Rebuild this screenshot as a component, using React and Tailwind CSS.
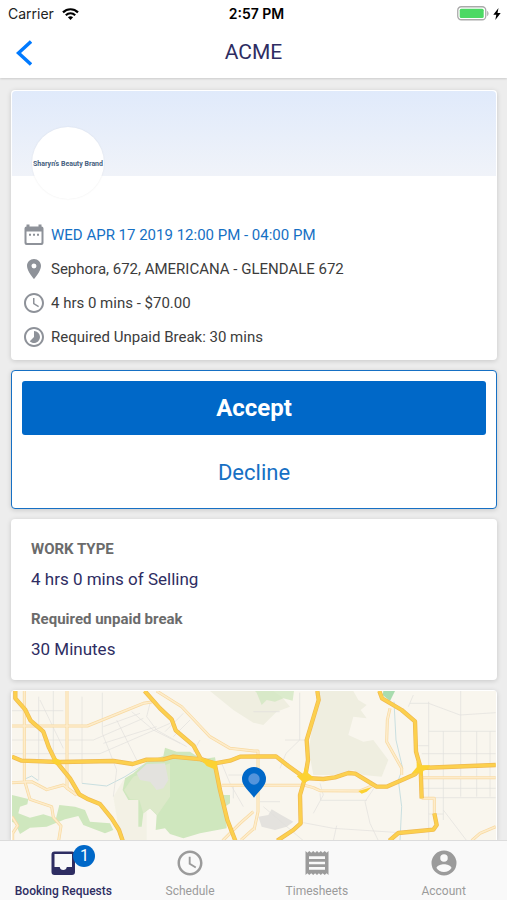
import React from 'react';
import {
  MdPlace,
  MdAccessTime,
  MdTimelapse,
} from 'react-icons/md';

function StatusBar() {
  return (
    <div className="grid h-[27px] grid-cols-3 items-center pl-2 pr-1.5 font-[Inter,sans-serif] text-sm text-[#222]">
      <div className="flex items-center gap-2">
        <span>Carrier</span>
        <svg className="h-3 w-[17px]" viewBox="0 0 17 12" fill="none" stroke="#000" strokeWidth="2.2">
          <path d="M1 4.4C5.2.2 11.8.2 16 4.4" />
          <path d="M3.8 7.2c2.7-2.6 6.700-2.600 9.400 0" />
          <path d="M8.500 12 5.900 9.300c1.500-1.300 3.700-1.300 5.200 0z" fill="#000" stroke="none" />
        </svg>
      </div>
      <div className="pl-1 text-center font-semibold text-black">2:57 PM</div>
      <div className="flex items-center justify-end gap-1">
        <svg className="h-[15px] w-8" viewBox="0 0 32 15">
          <rect x=".75" y=".75" width="28" height="13" rx="3.500" fill="#fff" stroke="#aaa" strokeWidth="1.300" />
          <rect x="2.700" y="2.700" width="24" height="9.200" rx="1.500" fill="#4cd964" />
          <path d="M30.300 5c1.500.5 1.500 4.500 0 5z" fill="#999" />
        </svg>
        <svg className="h-3 w-2" viewBox="0 0 8 12">
          <path d="M5.500 0 .3 6.800h3L2.300 12 7.700 4.900H4.500z" fill="#000" />
        </svg>
      </div>
    </div>
  );
}

function Header() {
  return (
    <header className="z-10 shrink-0 bg-white shadow-[0_1px_2px_rgba(0,0,0,0.14)]">
      <StatusBar />
      <div className="grid h-[51px] grid-cols-[1fr_auto_1fr] items-center px-4">
        <button type="button" aria-label="Back" className="h-[26px] w-4">
          <svg className="h-[26px] w-4" viewBox="0 0 16 26" fill="none" stroke="#007aff" strokeWidth="3.4">
            <path d="M15 1.500 2.500 13 15 24.500" />
          </svg>
        </button>
        <h1 className="text-[21px] text-[#2e2d62]">ACME</h1>
      </div>
    </header>
  );
}

function CalendarIcon({ className }) {
  return (
    <svg className={className} viewBox="0 0 24 24" fill="currentColor">
      <path
        fillRule="evenodd"
        d="M4.500 1.500h3v2h9v-2h3v2A2 2 0 0 1 21.500 5.500V20a2 2 0 0 1-2 2h-15a2 2 0 0 1-2-2V5.500a2 2 0 0 1 2-2zM4.500 8.500v10.800c0 .4.300.7.700.7h13.600c.4 0 .7-.3.7-.7V8.500z"
      />
      <path d="M7 10.800h2v2H7zM11 10.800h2v2h-2zM15 10.800h2v2h-2z" />
    </svg>
  );
}

function Detail({ icon: Icon, children, className = 'text-[#3c3c3c]' }) {
  return (
    <li className="flex h-[34px] items-center gap-[5px]">
      <Icon className="h-6 w-6 shrink-0 text-[#8e9299]" />
      <span className={className}>{children}</span>
    </li>
  );
}

const card = 'rounded bg-white shadow-[0_1px_5px_rgba(0,0,0,0.16)]';

function ShiftCard() {
  return (
    <section className={`${card} h-[270px] p-px`}>
      <div className="h-[85px] rounded-t bg-linear-to-b from-[#e0eafb] to-[#f0f3f9] pl-5 pt-9">
        <div className="flex h-[72px] w-[72px] items-center justify-center rounded-full bg-white pt-0.5 shadow-[0_0_2px_rgba(0,0,0,0.08)]">
          <span className="whitespace-nowrap text-[7px] font-bold text-[#465f80]">
            Sharyn's Beauty Brand
          </span>
        </div>
      </div>
      <ul className="pl-2.5 pt-[42px] text-[15px]">
        <Detail icon={CalendarIcon} className="text-[#1670c4]">WED APR 17 2019 12:00 PM - 04:00 PM</Detail>
        <Detail icon={MdPlace}>Sephora, 672, AMERICANA - GLENDALE 672</Detail>
        <Detail icon={MdAccessTime}>4 hrs 0 mins - $70.00</Detail>
        <Detail icon={MdTimelapse}>Required Unpaid Break: 30 mins</Detail>
      </ul>
    </section>
  );
}

function Actions() {
  return (
    <section className={`${card} flex h-[139px] flex-col border border-[#1670c4] px-2.5 pt-2.5`}>
      <button type="button" className="h-[54px] rounded-[3px] bg-[#0068c8] text-2xl font-bold text-white">
        Accept
      </button>
      <button type="button" className="mt-2.5 h-[54px] text-[22px] text-[#1670c4]">
        Decline
      </button>
    </section>
  );
}

function WorkType() {
  return (
    <dl className={`${card} h-[161px] px-5 pt-5`}>
      <dt className="text-[15px] leading-5 font-bold text-[#6b6b6b]">WORK TYPE</dt>
      <dd className="mt-2 text-[17px] leading-6 text-[#2e2d62]">4 hrs 0 mins of Selling</dd>
      <dt className="mt-[18px] text-[15px] leading-5 font-bold text-[#6b6b6b]">Required unpaid break</dt>
      <dd className="mt-2 text-[17px] leading-6 text-[#2e2d62]">30 Minutes</dd>
    </dl>
  );
}

const freeways = [
  'M46 33V55L75 88 92 122 130 155 147 203 165 240 210 295 238 343 265 358 300 372 335 415 357 450 368 482',
  'M36 230 65 242 180 246 340 243 398 252 440 239 490 238 520 230 605 238 645 250 690 242 720 230 828 229 865 258 915 294',
  'M434 33 480 85 515 118 527 151 580 196 603 238 645 255 660 330 682 420 706 482',
  'M952 33 956 60 920 180 924 240 915 294 900 345 902 430 880 450 832 482',
  'M915 294 970 297 1005 292 1045 279 1066 281 1130 320 1160 320 1245 283 1262 264 1487 255',
  'M1138 33 1146 55 1205 90 1245 124 1248 215 1262 264 1265 355',
  'M1303 400 1310 435 1300 449 1195 459 1168 482',
];

const avenues = [
  'M73 33V300L90 358 155 380 160 412 183 438 176 482',
  'M201 33V325L230 345',
  'M36 138H262L430 70 455 66',
  'M36 308 95 305 140 329 190 315 230 345',
  'M36 410 53 437 38 460V482',
  'M470 33 545 80 630 170 690 205 762 213H774V395L762 450',
  'M665 316H915L940 323 960 332 1080 333 1120 316',
  'M1170 85 1162 120 1160 185 1205 265V285',
  'M1265 293H1487',
  'M1265 355H1303V400',
  'M1415 482 1440 460 1487 440',
  'M668 482 720 430 760 395',
  'M723 480 762 445',
];

const streets = [
  'M116 50V300', 'M160 33V240', 'M246 50V310', 'M307 38V160L350 270 340 350',
  'M36 92H190', 'M36 180H280L430 115', 'M36 221H300L510 130', 'M120 60 190 205',
  'M310 140 420 100', 'M310 190 470 140', 'M350 120 410 240', 'M395 95 460 150 540 190',
  'M450 70 440 110 470 150 560 200', 'M550 100 495 155', 'M570 120 520 170', 'M600 180 580 215',
  'M665 250 690 310 730 380', 'M685 285H730', 'M700 316V355',
  'M899 38V180L858 220 840 265', 'M855 180H915', 'M839 95H760',
  'M960 340 962 361H1100', 'M910 428 1000 445 1200 458', 'M1010 437 1000 482',
  'M1125 320 1095 365 1110 430 1135 482', 'M780 365H840', 'M790 380 890 465 910 482',
  'M1286 65V480', 'M1230 70H1286L1380 105 1487 98', 'M1240 45 1225 80', 'M1382 33V350',
  'M1286 154H1487', 'M1330 154V420', 'M1430 154V350', 'M1470 154V350', 'M1265 221H1487',
  'M1265 325H1487', 'M1265 353H1487', 'M1286 402H1330', 'M1255 197H1286', 'M1330 390 1400 482',
  'M960 310 970 345 940 400',
];

function MapDrawing() {
  return (
    <svg
      className="h-[149px] w-full"
      viewBox="36 33 1452 447"
      preserveAspectRatio="xMidYMin slice"
      role="img"
      aria-label="Map of the shift location"
    >
      <rect x="0" y="0" width="1560" height="600" fill="#f9f6ee" />
      <g fill="#efeee0">
        <path d="M630 33 700 90 760 128 790 135 830 95 870 80 845 50 820 33z" />
        <path d="M960 33H1060L1075 60 1100 75 1082 90 1100 115 1060 110 1045 165 1090 185 1120 180 1150 220 1165 240 1145 290 1090 285 1060 270 1000 285 940 285 926 210 935 150z" />
        <path d="M370 300 340 350 350 410 365 482H440V300z" opacity=".6" />
      </g>
      <g fill="#cfe7be">
        <path d="M495 203 530 215 570 215 605 238 645 232 650 260 665 345H690V370L678 378 680 445 600 460 550 475 510 462 495 445 467 450 470 405 450 385 430 400 425 440H415V360L385 360 368 330 375 295 400 280 440 245 490 228z" />
        <path d="M36 345 85 357 82 373 60 380 55 400 90 413 130 403 168 415 178 375 225 380 255 390 270 425 330 430 340 450 315 460 250 435 235 408 195 418 140 440 90 443 60 462 45 430 36 425z" />
        <path d="M770 38 785 75 800 60 825 65 850 55 878 62 882 33H765z" opacity=".7" />
        <path d="M1150 33H1185L1170 63 1148 45z" fill="#a9dcae" />
      </g>
      <path d="M510 250 400 290 372 330 390 358 418 360 430 400 450 385 472 405 510 350z" fill="#dce9c9" />
      <path d="M410 280 440 252 495 250 505 300 490 325 470 330 450 305 420 300z" fill="#e3e2de" />
      <path d="M775 410 805 405 815 388 840 403 880 425 860 440 825 450 785 440z" fill="#e4e2de" />
      <g fill="none" stroke="#c9dfe0" strokeWidth="3">
        <path d="M246 310 320 318 375 290 430 255" />
        <path d="M75 297 95 288 115 302" />
        <path d="M1182 65 1188 180 1208 265 1195 300 1205 380 1200 482" />
      </g>
      <g fill="none" stroke="#e1dfdc" strokeWidth="2">
        {streets.map((d) => <path key={d} d={d} />)}
      </g>
      <g fill="none" stroke="#f8d9a0" strokeWidth="9" strokeLinejoin="round">
        {avenues.map((d) => <path key={d} d={d} />)}
      </g>
      <g fill="none" stroke="#fdeccb" strokeWidth="5" strokeLinejoin="round">
        {avenues.map((d) => <path key={d} d={d} />)}
      </g>
      <g fill="none" stroke="#efb950" strokeWidth="13" strokeLinejoin="round">
        {freeways.map((d) => <path key={d} d={d} />)}
      </g>
      <g fill="none" stroke="#fcd04e" strokeWidth="9" strokeLinejoin="round">
        {freeways.map((d) => <path key={d} d={d} />)}
      </g>
      <g fill="#fcd232">
        <path d="M154 243 165 233 185 243 178 256 165 253z" />
        <path d="M600 235 652 245 649 270 620 258z" />
        <path d="M890 288 910 280 915 262 925 280 940 292 925 302 912 310z" />
        <path d="M1075 333 1115 322 1100 335 1085 341z" />
        <path d="M1235 280 1250 262 1250 245 1262 256 1290 256 1285 266 1270 272 1265 290 1258 278z" />
      </g>
      <path d="M762 353C748 333 726 319 726 297a36 36 0 0 1 72 0c0 22-22 36-36 56z" fill="#0068c8" />
      <circle cx="762" cy="297" r="17" fill="#5494dc" />
    </svg>
  );
}

function InboxIcon({ className }) {
  return (
    <svg className={className} viewBox="0 0 30 30" fill="currentColor">
      <path
        fillRule="evenodd"
        d="M6.500 3.500h17.500a3 3 0 0 1 3 3V24a3 3 0 0 1-3 3H6.500a3 3 0 0 1-3-3V6.500a3 3 0 0 1 3-3zM6.500 6v13h5.200a3.600 3.600 0 0 0 7.100 0H24V6z"
      />
    </svg>
  );
}

function ReceiptIcon({ className }) {
  return (
    <svg className={className} viewBox="0 0 30 30" fill="currentColor">
      <path
        fillRule="evenodd"
        d="M3.500 3 5.400 4.700 7.300 3l1.900 1.700L11.200 3l1.900 1.700L15 3l1.900 1.700L18.800 3l1.900 1.700L22.700 3l1.900 1.700L26.500 3v24l-1.900-1.700-1.900 1.700-2-1.700-1.900 1.700-1.900-1.700L15 27l-1.900-1.700-1.900 1.700-2-1.700L7.300 27l-1.900-1.700L3.500 27zM7 8.300v2.600h16V8.300zm0 5.400v2.600h16v-2.600zm0 5.400v2.600h16v-2.600z"
      />
    </svg>
  );
}

function AccountIcon({ className }) {
  return (
    <svg className={className} viewBox="0 0 24 24" fill="currentColor">
      <path d="M12 2a10 10 0 1 0 0 20 10 10 0 0 0 0-20zm0 3a3 3 0 1 1 0 6 3 3 0 0 1 0-6zm0 14.200a7.200 7.200 0 0 1-6-3.220c.030-1.990 4-3.080 6-3.080s5.970 1.090 6 3.080a7.200 7.200 0 0 1-6 3.220z" />
    </svg>
  );
}

function Tab({ icon: Icon, label, badge, active }) {
  return (
    <a
      href="#"
      aria-current={active ? 'page' : undefined}
      className={`flex flex-1 flex-col items-center pt-[7px] text-xs ${active ? 'font-medium text-[#2e2d62]' : 'text-[#9b9b9b]'}`}
    >
      <span className="relative">
        <Icon className="h-[30px] w-[30px]" />
        {badge && (
          <span className="absolute -top-[3px] left-[25px] flex h-[22px] w-[22px] items-center justify-center rounded-full bg-[#0068c8] text-base font-normal text-white">
            {badge}
          </span>
        )}
      </span>
      <span className="mt-[5px] leading-4">{label}</span>
    </a>
  );
}

export default function App() {
  return (
    <div className="flex h-screen flex-col overflow-hidden bg-[#ededed] font-[Roboto,sans-serif]">
      <Header />
      <main className="flex min-h-0 flex-1 flex-col gap-2.5 overflow-y-auto pl-[11px] pr-2.5 pt-3 [scrollbar-width:none] *:shrink-0">
        <ShiftCard />
        <Actions />
        <WorkType />
        <section className="overflow-hidden rounded-t bg-white p-px shadow-[0_1px_5px_rgba(0,0,0,0.16)]">
          <MapDrawing />
        </section>
      </main>
      <nav className="flex h-[60px] shrink-0 border-t border-[#dcdcdc] bg-[#f9f9f9]">
        <Tab icon={InboxIcon} label="Booking Requests" badge="1" active />
        <Tab icon={MdAccessTime} label="Schedule" />
        <Tab icon={ReceiptIcon} label="Timesheets" />
        <Tab icon={AccountIcon} label="Account" />
      </nav>
    </div>
  );
}
